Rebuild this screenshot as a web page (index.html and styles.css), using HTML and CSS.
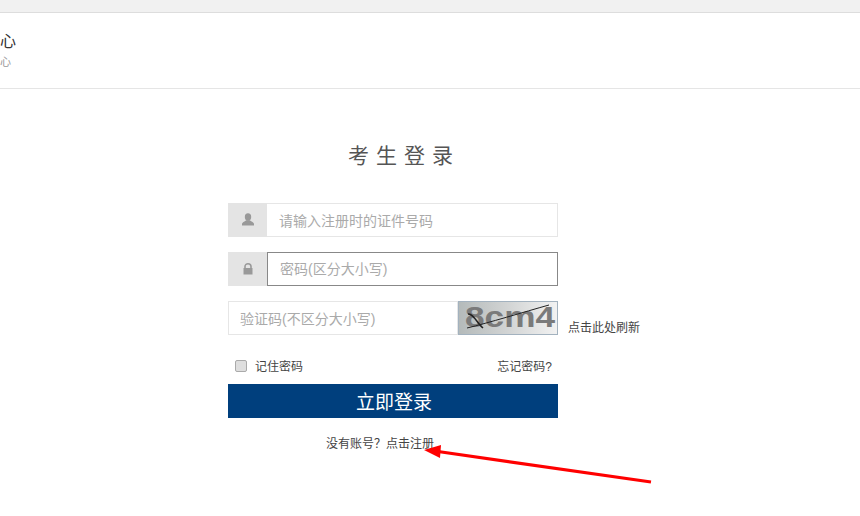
FILE: index.html
```html
<!DOCTYPE html>
<html lang="zh-CN">
<head>
  <meta charset="UTF-8">
  <meta name="viewport" content="width=device-width, initial-scale=1.0">
  <title>考生登录</title>
  <link rel="stylesheet" href="styles.css">
</head>
<body>

  <div class="topbar"></div>

  <div class="header">
    <div class="brand">心</div>
    <div class="brand-sub">心</div>
  </div>

  <div class="main">
    <h1>考生登录</h1>

    <div class="login-form">
      <div class="input-row">
        <span class="addon">
          <svg width="14" height="14" viewBox="0 0 14 14"><ellipse cx="7" cy="4" rx="3.200" ry="3.700" fill="#999"/><path d="M1 12.500V10.800C1 9.300 3.500 8.800 5.200 7.200H8.800C10.500 8.800 13 9.300 13 10.800V12.500Z" fill="#999"/></svg>
        </span>
        <input type="text" class="field field-first" placeholder="请输入注册时的证件号码">
      </div>

      <div class="input-row">
        <span class="addon">
          <svg width="12" height="14" viewBox="0 0 12 14"><path d="M3 6V4.500C3 2.800 4.300 1.800 6 1.800S9 2.800 9 4.500V6" fill="none" stroke="#999" stroke-width="1.600"/><rect x="1.500" y="6" width="9" height="6.500" fill="#999"/></svg>
        </span>
        <input type="password" class="field field-focus" placeholder="密码(区分大小写)">
      </div>

      <div class="input-row">
        <input type="text" class="field field-captcha" placeholder="验证码(不区分大小写)">
        <svg class="captcha" width="100" height="34" viewBox="0 0 100 34">
          <defs>
            <linearGradient id="captchaBg" x1="0" y1="0" x2="1" y2="0">
              <stop offset="0" stop-color="#b4baba"/>
              <stop offset="0.5" stop-color="#d2d4d4"/>
              <stop offset="1" stop-color="#f2f2f2"/>
            </linearGradient>
          </defs>
          <rect x="0.500" y="0.500" width="99" height="33" fill="url(#captchaBg)" stroke="#a3b2bf"/>
          <text x="7" y="26" class="captcha-text" textLength="90" lengthAdjust="spacingAndGlyphs">8cm4</text>
          <path d="M9 27C30 22 66 11 91 4" fill="none" stroke="#222" stroke-width="1"/>
          <path d="M10 13C15 12 19 22 25 27" fill="none" stroke="#222" stroke-width="1.500"/>
        </svg>
        <a class="refresh">点击此处刷新</a>
      </div>

      <div class="options">
        <label class="remember"><input type="checkbox">记住密码</label>
        <a class="forgot">忘记密码?</a>
      </div>

      <button class="btn-login">立即登录</button>

      <div class="register">没有账号？点击注册</div>
    </div>
  </div>

  <!-- 标注箭头 -->
  <svg class="arrow" width="860" height="516" viewBox="0 0 860 516">
    <path d="M651 482L438 451.500" fill="none" stroke="#f00" stroke-width="3.200"/>
    <polygon points="424,450 441,445 440,458" fill="#f00"/>
  </svg>

</body>
</html>
```

FILE: styles.css
```css
* {
  box-sizing: border-box;
}
body {
  margin: 0;
  height: 516px;
  overflow: hidden;
  background-color: #fff;
  font-family: "Liberation Sans", "Noto Sans CJK SC", sans-serif;
  color: #444;
  font-size: 12px;
}
.topbar {
  height: 13px;
  background-color: #f1f1f1;
  border-bottom: 1px solid #ddd;
}
.header {
  height: 76px;
  padding-top: 20px;
  border-bottom: 1px solid #e5e5e5;
}
.brand {
  font-size: 16px;
  line-height: 18px;
  color: #333;
}
.brand-sub {
  margin-top: 4px;
  font-size: 11px;
  line-height: 14px;
  color: #999;
}
.main {
  padding-left: 228px;
}
h1 {
  width: 352px;
  margin: 53px 0 33px;
  font-size: 21px;
  line-height: 28px;
  font-weight: normal;
  letter-spacing: 7px;
  text-align: center;
  color: #555;
}
.login-form {
  width: 330px;
}
.input-row {
  display: flex;
  height: 34px;
  margin-bottom: 15px;
}
.addon {
  display: flex;
  align-items: center;
  justify-content: center;
  flex: 0 0 39px;
  background-color: #e4e4e4;
}
.field {
  flex: 1;
  min-width: 0;
  height: 34px;
  padding: 0 12px;
  border: 1px solid #e6e6e6;
  border-left: none;
  outline: none;
  font-family: inherit;
  font-size: 14px;
  color: #555;
}
.field::placeholder {
  color: #aaa;
}
.field-first {
  padding-top: 1px;
}
.field-focus {
  border: 1px solid #888;
}
.field-captcha {
  flex: 0 0 230px;
  padding: 1px 12px 0 11px;
  border-left: 1px solid #e6e6e6;
}
.captcha {
  flex: 0 0 100px;
  display: block;
}
.captcha-text {
  font-family: "Liberation Sans", sans-serif;
  font-size: 30px;
  font-weight: bold;
  fill: #7a7a7a;
}
.refresh {
  flex: none;
  margin-left: 10px;
  margin-top: 19px;
  line-height: 17px;
  white-space: nowrap;
}
.options {
  display: flex;
  justify-content: space-between;
  align-items: center;
  height: 18px;
  margin-top: 21px;
  padding: 0 6px 0 7px;
}
.remember {
  display: flex;
  align-items: center;
}
.remember input {
  appearance: none;
  width: 12px;
  height: 12px;
  margin: 1px 8px 0 0;
  border: 1px solid #aaa;
  border-radius: 2px;
  background-color: #dedede;
}
.btn-login {
  display: block;
  width: 100%;
  height: 34px;
  margin-top: 10px;
  padding: 0 0 2px 2px;
  border: none;
  background-color: #003f7d;
  color: white;
  font-family: inherit;
  font-size: 19px;
  cursor: pointer;
}
.register {
  margin-top: 18px;
  padding-right: 26px;
  line-height: 16px;
  text-align: center;
}
.arrow {
  position: absolute;
  left: 0;
  top: 0;
  pointer-events: none;
}
```
